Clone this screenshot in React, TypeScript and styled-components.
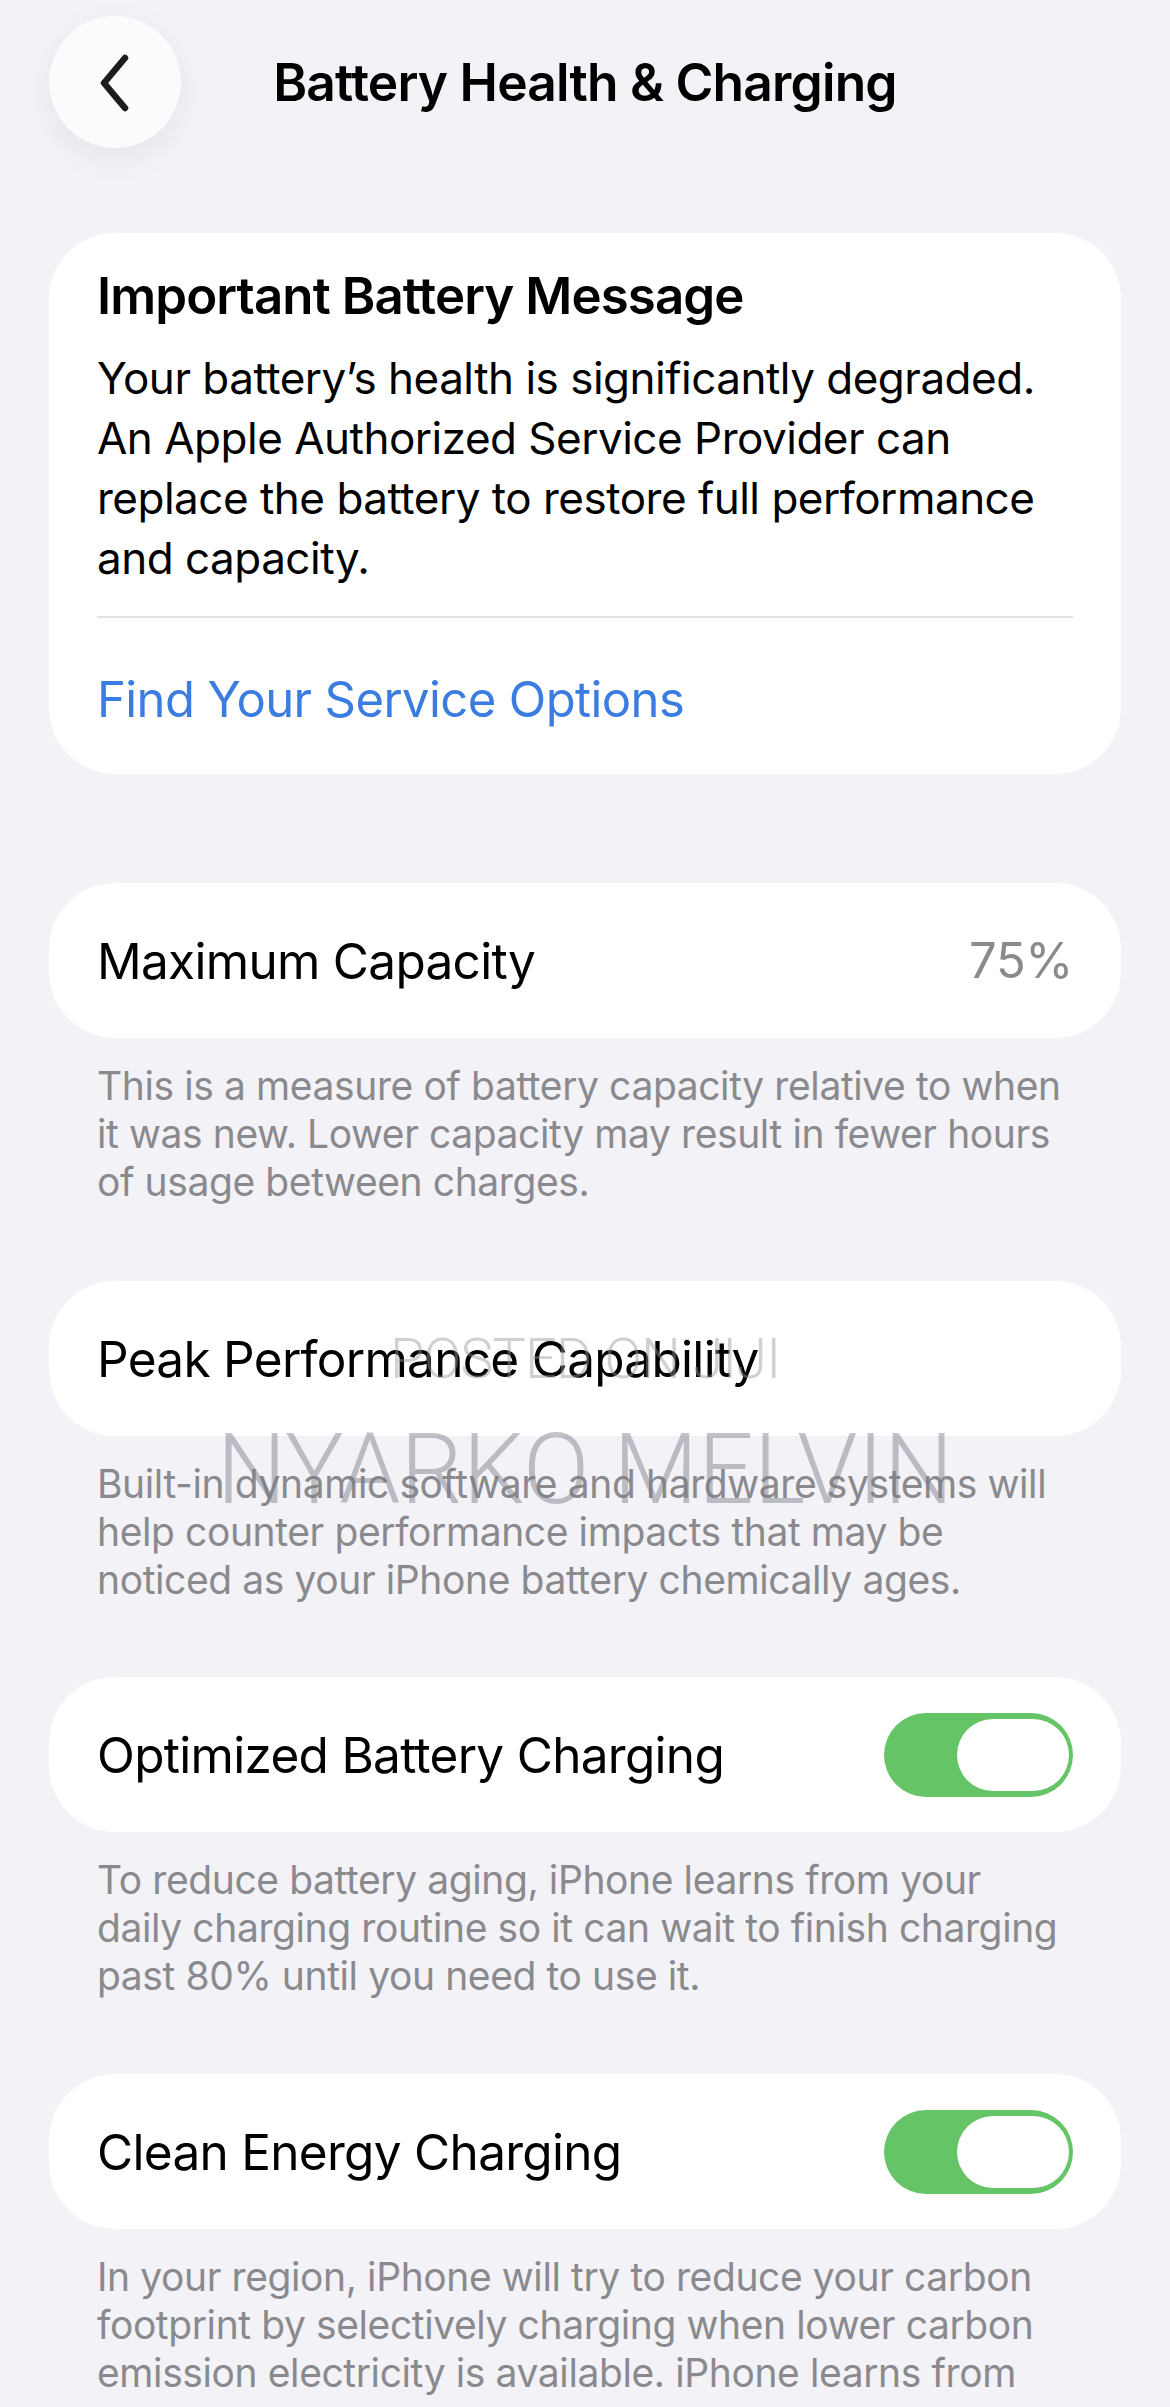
import React from 'react'
import styled, { createGlobalStyle } from 'styled-components'

const colors = {
  background: '#f2f2f7',
  card: '#ffffff',
  text: '#000000',
  secondary: '#8a8a8e',
  blue: '#3a7cdf',
  green: '#65c466',
  divider: '#e3e3e8',
}

const GlobalStyle = createGlobalStyle`
  html, body {
    margin: 0;
    padding: 0;
    background: ${colors.background};
  }

  body {
    font-family: Inter, 'Noto Sans', sans-serif;
    color: ${colors.text};
    -webkit-font-smoothing: antialiased;
  }
`

const Page = styled.div`
  position: relative;
  width: 1170px;
  height: 2407px;
  box-sizing: border-box;
  padding: 16px 49px 0;
  overflow: hidden;
`

const Header = styled.header`
  display: grid;
  grid-template-columns: 132px 1fr 132px;
  align-items: center;
  height: 132px;
`

const BackButton = styled.button`
  display: flex;
  justify-content: center;
  align-items: center;
  width: 132px;
  height: 132px;
  padding: 0;
  border: none;
  border-radius: 50%;
  background: #fbfbfd;
  box-shadow: 0 10px 34px rgba(0, 0, 0, 0.06);
`

const Title = styled.h1`
  margin: 0;
  text-align: center;
  font-size: 51.5px;
  font-weight: 600;
  letter-spacing: -0.8px;
`

const Card = styled.section<{ $top: number }>`
  margin-top: ${({ $top }) => $top}px;
  background: ${colors.card};
  border-radius: 66px;
`

const MessageCard = styled(Card)`
  padding: 33px 48px 44px;
`

const MessageTitle = styled.h2`
  margin: 0;
  font-size: 51px;
  line-height: 60px;
  font-weight: 600;
  letter-spacing: -0.9px;
`

const MessageBody = styled.p`
  margin: 22px 0 0;
  font-size: 44px;
  line-height: 60px;
  letter-spacing: -0.5px;
`

const Line = styled.span`
  display: block;
  white-space: nowrap;
`

const Divider = styled.hr`
  margin: 28px 0 0;
  border: none;
  height: 2px;
  background: ${colors.divider};
`

const ServiceLink = styled.a`
  display: block;
  margin-top: 52px;
  color: ${colors.blue};
  font-size: 49px;
  line-height: 60px;
  letter-spacing: -0.6px;
  text-decoration: none;
`

const Row = styled(Card)`
  display: flex;
  justify-content: space-between;
  align-items: center;
  height: 155px;
  padding: 0 48px;
`

const RowLabel = styled.span`
  font-size: 49.5px;
  letter-spacing: -0.7px;
`

const RowValue = styled.span`
  color: ${colors.secondary};
  font-size: 49px;
  letter-spacing: -0.4px;
`

const Footnote = styled.p`
  margin: 24px 0 0;
  padding: 0 48px;
  color: ${colors.secondary};
  font-size: 39px;
  line-height: 48px;
  letter-spacing: -0.4px;
`

const ToggleTrack = styled.span<{ $on: boolean }>`
  display: flex;
  justify-content: ${({ $on }) => ($on ? 'flex-end' : 'flex-start')};
  align-items: center;
  width: 189px;
  height: 84px;
  box-sizing: border-box;
  padding: 0 4px;
  border-radius: 42px;
  background: ${({ $on }) => ($on ? colors.green : '#e9e9eb')};
`

const ToggleKnob = styled.span`
  width: 112px;
  height: 72px;
  border-radius: 36px;
  background: #ffffff;
`

const Watermark = styled.div`
  position: absolute;
  left: 0;
  right: 0;
  display: flex;
  justify-content: center;
  pointer-events: none;
  font-family: Roboto, 'Liberation Sans', sans-serif;
  white-space: nowrap;
`

const WatermarkSmall = styled(Watermark)`
  top: 1326px;
  color: rgba(150, 150, 158, 0.45);
  font-size: 56px;
  font-weight: 300;
  letter-spacing: -1px;
`

const WatermarkLarge = styled(Watermark)`
  top: 1412px;
  color: rgba(120, 120, 130, 0.45);
  font-size: 98px;
  font-weight: 300;
`

const ChevronLeft = () => (
  <svg width="40" height="60" viewBox="0 0 40 60" fill="none">
    <path
      d="M30 6 L9 31 L30 56"
      stroke="#1c1c1e"
      strokeWidth="6.5"
      strokeLinecap="round"
      strokeLinejoin="round"
    />
  </svg>
)

const Toggle: React.FC<{ on: boolean }> = ({ on }) => (
  <ToggleTrack $on={on}>
    <ToggleKnob />
  </ToggleTrack>
)

interface SettingProps {
  top: number
  label: string
  value?: string
  toggle?: boolean
  note: string[]
}

const Setting: React.FC<SettingProps> = ({ top, label, value, toggle, note }) => (
  <>
    <Row $top={top}>
      <RowLabel>{label}</RowLabel>
      {value && <RowValue>{value}</RowValue>}
      {toggle !== undefined && <Toggle on={toggle} />}
    </Row>
    <Footnote>
      {note.map((line) => (
        <Line key={line}>{line}</Line>
      ))}
    </Footnote>
  </>
)

const messageLines = [
  'Your battery’s health is significantly degraded.',
  'An Apple Authorized Service Provider can',
  'replace the battery to restore full performance',
  'and capacity.',
]

const App = () => (
  <Page>
    <GlobalStyle />
    <Header>
      <BackButton aria-label="Back">
        <ChevronLeft />
      </BackButton>
      <Title>Battery Health &amp; Charging</Title>
    </Header>

    <MessageCard $top={85}>
      <MessageTitle>Important Battery Message</MessageTitle>
      <MessageBody>
        {messageLines.map((line) => (
          <Line key={line}>{line}</Line>
        ))}
      </MessageBody>
      <Divider />
      <ServiceLink href="#">Find Your Service Options</ServiceLink>
    </MessageCard>

    <Setting
      top={109}
      label="Maximum Capacity"
      value="75%"
      note={[
        'This is a measure of battery capacity relative to when',
        'it was new. Lower capacity may result in fewer hours',
        'of usage between charges.',
      ]}
    />
    <Setting
      top={75}
      label="Peak Performance Capability"
      note={[
        'Built-in dynamic software and hardware systems will',
        'help counter performance impacts that may be',
        'noticed as your iPhone battery chemically ages.',
      ]}
    />
    <Setting
      top={73}
      label="Optimized Battery Charging"
      toggle
      note={[
        'To reduce battery aging, iPhone learns from your',
        'daily charging routine so it can wait to finish charging',
        'past 80% until you need to use it.',
      ]}
    />
    <Setting
      top={74}
      label="Clean Energy Charging"
      toggle
      note={[
        'In your region, iPhone will try to reduce your carbon',
        'footprint by selectively charging when lower carbon',
        'emission electricity is available. iPhone learns from',
      ]}
    />

    <WatermarkSmall>POSTED ON JIJI</WatermarkSmall>
    <WatermarkLarge>NYARKO MELVIN</WatermarkLarge>
  </Page>
)

export default App
